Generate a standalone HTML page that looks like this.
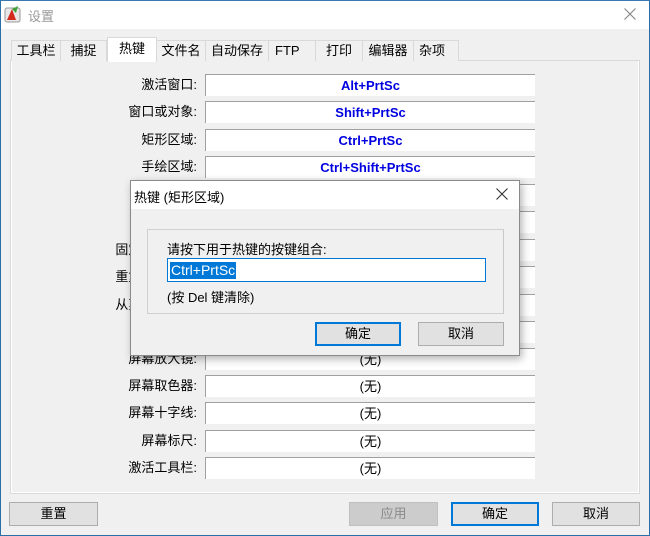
<!DOCTYPE html>
<html><head><meta charset="utf-8"><style>
*{margin:0;padding:0;box-sizing:border-box}
body{width:650px;height:536px;background:#f0f0f0;font-family:"Liberation Sans","Noto Sans CJK SC",sans-serif;font-size:13px;color:#000;position:relative;overflow:hidden}
.abs{position:absolute}
.win{left:0;top:0;width:650px;height:536px;border:1px solid #2b6ea8;border-top-color:#3a78b0}
.title{left:1px;top:1px;width:648px;height:28px;background:#fff}
.tab{position:absolute;top:40px;height:21px;border:1px solid #d9d9d9;border-bottom:none;background:#f0f0f0;text-align:center;line-height:19px;font-size:13px}
.panel{left:10px;top:60px;width:630px;height:434px;border:1px solid #d9d9d9;background:#f0f0f0}
.lbl{position:absolute;right:453px;width:150px;text-align:right;font-size:13px;line-height:22px;white-space:nowrap}
.val{position:absolute;left:205px;width:330px;height:22px;background:#fff;border-top:1px solid #a0a0a0;border-left:1px solid #a0a0a0;text-align:center;line-height:21px;font-size:13px}
.b{color:#0000e0;font-weight:bold}
.btn{position:absolute;height:24px;border:1px solid #adadad;background:#e1e1e1;text-align:center;line-height:22px;font-size:13px}
.btn.def{border:2px solid #0078d7;line-height:20px}
</style></head><body>
<div class="abs win"></div>
<div class="abs title"></div>
<svg class="abs" style="left:4px;top:5px" width="18" height="18" viewBox="0 0 18 18">
<rect x="1" y="3" width="15" height="14" rx="2" fill="#e8e8e8" stroke="#999"/>
<path d="M3 15 L8 4 L12 15 Z" fill="#d42a1e"/><path d="M8 4 L14 1 L12 8 Z" fill="#3aa335"/></svg>
<div class="abs" style="left:28px;top:6px;color:#999;font-size:13px">设置</div>
<svg class="abs" style="left:624px;top:8px" width="12" height="12"><path d="M0.5 0.5L11.5 11.5M11.5 0.5L0.5 11.5" stroke="#888" stroke-width="1.2"/></svg>

<div class="abs panel"></div>
<div class="tab" style="left:11px;width:50px">工具栏</div>
<div class="tab" style="left:60px;width:47px">捕捉</div>
<div class="tab" style="left:156px;width:50px">文件名</div>
<div class="tab" style="left:205px;width:64px">自动保存</div>
<div class="tab" style="left:268px;width:48px;text-align:left;padding-left:6px">FTP</div>
<div class="tab" style="left:315px;width:48px">打印</div>
<div class="tab" style="left:362px;width:52px">编辑器</div>
<div class="tab" style="left:413px;width:46px;text-align:left;padding-left:5px">杂项</div>
<div class="tab" style="left:107px;top:37px;height:25px;width:50px;background:#fff;border-color:#d9d9d9;line-height:22px;z-index:2">热键</div>
<div class="abs" style="left:11px;top:61px;width:628px;height:432px;border:1px solid #fff;border-top:none"></div>

<div class="lbl" style="top:74px">激活窗口:</div><div class="val b" style="top:74px">Alt+PrtSc</div>
<div class="lbl" style="top:101px">窗口或对象:</div><div class="val b" style="top:101px">Shift+PrtSc</div>
<div class="lbl" style="top:129px">矩形区域:</div><div class="val b" style="top:129px">Ctrl+PrtSc</div>
<div class="lbl" style="top:156px">手绘区域:</div><div class="val b" style="top:156px">Ctrl+Shift+PrtSc</div>
<div class="lbl" style="top:184px">全屏幕:</div><div class="val" style="top:184px">(无)</div>
<div class="lbl" style="top:211px">滚动窗口:</div><div class="val" style="top:211px">(无)</div>
<div class="lbl" style="top:239px;width:200px">固定区域大小:</div><div class="val" style="top:239px">(无)</div>
<div class="lbl" style="top:266px;width:200px">重复上次捕捉:</div><div class="val" style="top:266px">(无)</div>
<div class="lbl" style="top:294px;width:200px">从剪贴板粘贴:</div><div class="val" style="top:294px">(无)</div>
<div class="lbl" style="top:321px">屏幕录像:</div><div class="val" style="top:321px">(无)</div>
<div class="lbl" style="top:348px">屏幕放大镜:</div><div class="val" style="top:348px">(无)</div>
<div class="lbl" style="top:375px">屏幕取色器:</div><div class="val" style="top:375px">(无)</div>
<div class="lbl" style="top:402px">屏幕十字线:</div><div class="val" style="top:402px">(无)</div>
<div class="lbl" style="top:430px">屏幕标尺:</div><div class="val" style="top:430px">(无)</div>
<div class="lbl" style="top:457px">激活工具栏:</div><div class="val" style="top:457px">(无)</div>

<div class="btn" style="left:9px;top:502px;width:89px">重置</div>
<div class="btn" style="left:349px;top:502px;width:89px;background:#cccccc;border-color:#bfbfbf;color:#8a8a8a">应用</div>
<div class="btn def" style="left:451px;top:502px;width:88px">确定</div>
<div class="btn" style="left:552px;top:502px;width:88px">取消</div>

<div class="abs" style="left:130px;top:180px;width:390px;height:176px;background:#f0f0f0;border:1px solid #8a8a8a;box-shadow:2px 3px 8px rgba(0,0,0,0.3)">
 <div class="abs" style="left:0;top:0;width:388px;height:28px;background:#fff"></div>
 <div class="abs" style="left:3px;top:6px;font-size:13px">热键 (矩形区域)</div>
 <svg class="abs" style="left:365px;top:7px" width="12" height="12"><path d="M0.5 0.5L11.5 11.5M11.5 0.5L0.5 11.5" stroke="#333" stroke-width="1.1"/></svg>
 <div class="abs" style="left:16px;top:48px;width:357px;height:85px;border:1px solid #d0d0d0;border-right-color:#c8c8c8"></div>
 <div class="abs" style="left:36px;top:58px">请按下用于热键的按键组合:</div>
 <div class="abs" style="left:36px;top:77px;width:319px;height:24px;background:#fff;border:1px solid #0078d7">
  <span class="abs" style="left:2px;top:3px;background:#0078d7;color:#fff;font-size:14px;line-height:17px;padding:0 1px">Ctrl+PrtSc</span></div>
 <div class="abs" style="left:36px;top:106px">(按 Del 键清除)</div>
 <div class="btn def" style="left:184px;top:141px;width:86px">确定</div>
 <div class="btn" style="left:287px;top:141px;width:86px">取消</div>
</div>
</body></html>
